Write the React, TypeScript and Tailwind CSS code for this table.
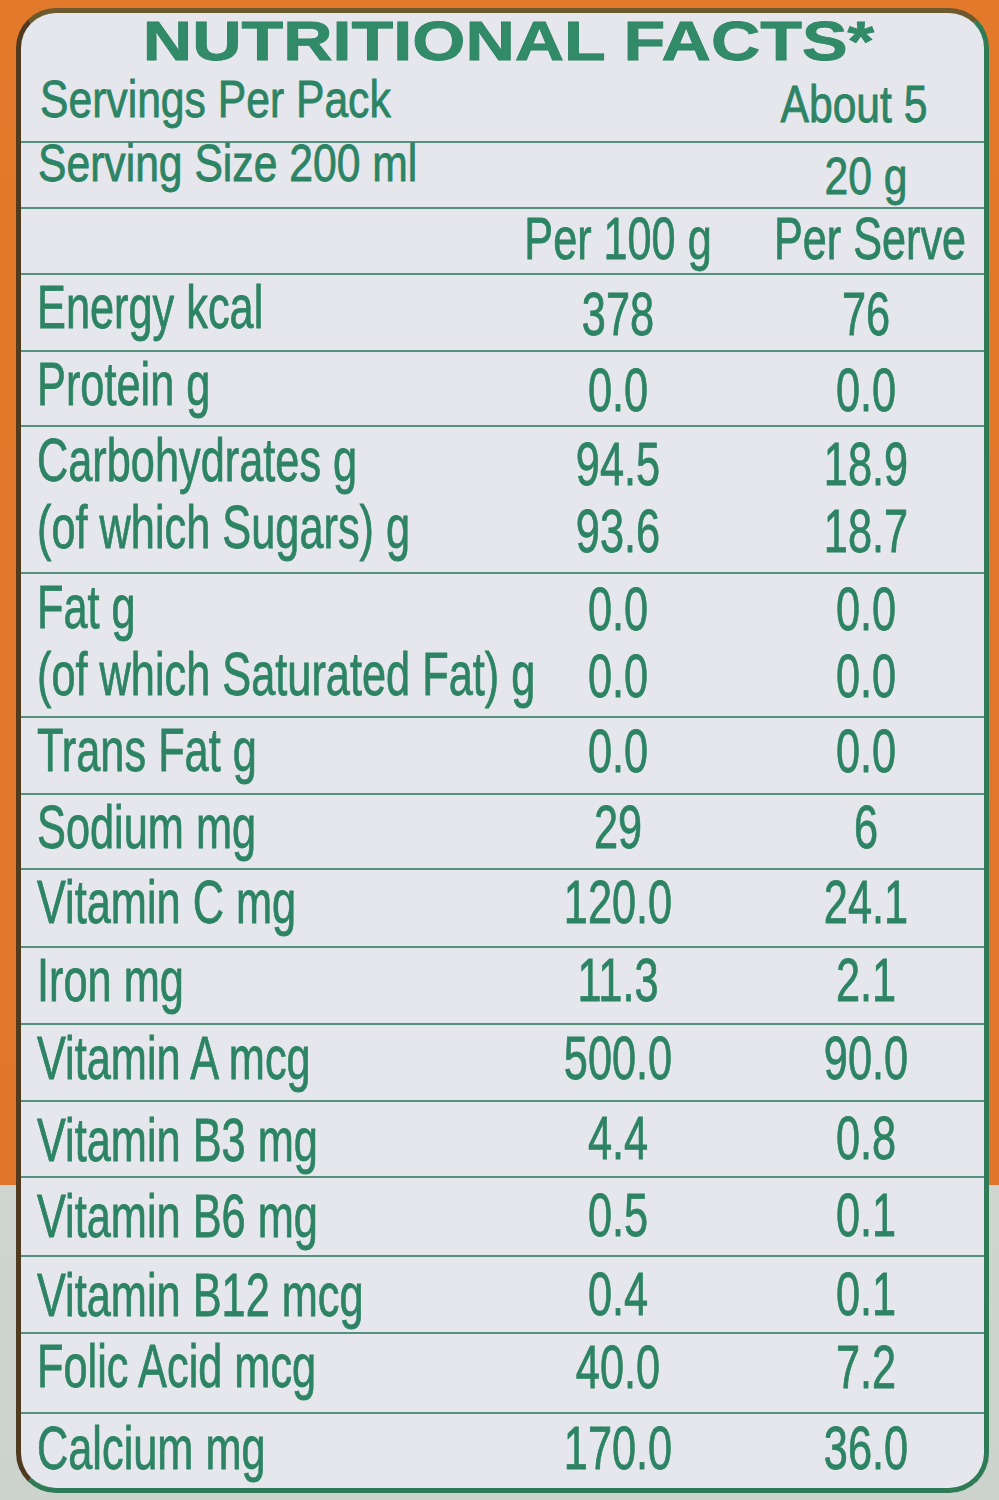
type Row = {
  label: string[];
  a: string[];
  b: string[];
  h: string;
  lead: string;
  pt: string;
  nudge: string;
};

const rows: Row[] = [
  { label: ['Energy kcal'], a: ['378'], b: ['76'], h: 'h-[77px]', lead: 'leading-[61px]', pt: 'pt-[2px]', nudge: 'pt-[9px]' },
  { label: ['Protein g'], a: ['0.0'], b: ['0.0'], h: 'h-[75px]', lead: 'leading-[61px]', pt: 'pt-[2px]', nudge: 'pt-[8px]' },
  {
    label: ['Carbohydrates g', '(of which Sugars) g'],
    a: ['94.5', '93.6'],
    b: ['18.9', '18.7'],
    h: 'h-[147px]',
    lead: 'leading-[67px]',
    pt: 'pt-0',
    nudge: 'pt-[4px]',
  },
  {
    label: ['Fat g', '(of which Saturated Fat) g'],
    a: ['0.0', '0.0'],
    b: ['0.0', '0.0'],
    h: 'h-[144px]',
    lead: 'leading-[67px]',
    pt: 'pt-0',
    nudge: 'pt-[2px]',
  },
  { label: ['Trans Fat g'], a: ['0.0'], b: ['0.0'], h: 'h-[77px]', lead: 'leading-[61px]', pt: 'pt-[2px]', nudge: 'pt-[3px]' },
  { label: ['Sodium mg'], a: ['29'], b: ['6'], h: 'h-[75px]', lead: 'leading-[61px]', pt: 'pt-[2px]', nudge: 'pt-[2px]' },
  { label: ['Vitamin C mg'], a: ['120.0'], b: ['24.1'], h: 'h-[78px]', lead: 'leading-[61px]', pt: 'pt-[2px]', nudge: 'pt-[2px]' },
  { label: ['Iron mg'], a: ['11.3'], b: ['2.1'], h: 'h-[77px]', lead: 'leading-[61px]', pt: 'pt-[2px]', nudge: 'pt-[2px]' },
  { label: ['Vitamin A mcg'], a: ['500.0'], b: ['90.0'], h: 'h-[77px]', lead: 'leading-[61px]', pt: 'pt-[3px]', nudge: 'pt-[3px]' },
  { label: ['Vitamin B3 mg'], a: ['4.4'], b: ['0.8'], h: 'h-[76px]', lead: 'leading-[61px]', pt: 'pt-[8px]', nudge: 'pt-[6px]' },
  { label: ['Vitamin B6 mg'], a: ['0.5'], b: ['0.1'], h: 'h-[79px]', lead: 'leading-[61px]', pt: 'pt-[8px]', nudge: 'pt-[7px]' },
  { label: ['Vitamin B12 mcg'], a: ['0.4'], b: ['0.1'], h: 'h-[77px]', lead: 'leading-[61px]', pt: 'pt-[8px]', nudge: 'pt-[7px]' },
  { label: ['Folic Acid mcg'], a: ['40.0'], b: ['7.2'], h: 'h-[80px]', lead: 'leading-[61px]', pt: 'pt-[2px]', nudge: 'pt-[3px]' },
  { label: ['Calcium mg'], a: ['170.0'], b: ['36.0'], h: 'h-[76px]', lead: 'leading-[61px]', pt: 'pt-[4px]', nudge: 'pt-[4px]' },
];

function NutrientRow({ row }: { row: Row }) {
  return (
    <div className={`grid grid-cols-[minmax(0,1fr)_260px_236px] border-t-2 border-[#55907c] text-[61px] ${row.h} ${row.lead}`}>
      <div className={`pl-[16px] ${row.pt}`}>
        {row.label.map(l => (
          <div key={l} className="origin-left scale-x-[0.71] whitespace-nowrap">{l}</div>
        ))}
      </div>
      <div className={row.nudge}>
        {row.a.map((v, i) => (
          <div key={i} className="flex justify-center scale-x-[0.71] whitespace-nowrap">{v}</div>
        ))}
      </div>
      <div className={row.nudge}>
        {row.b.map((v, i) => (
          <div key={i} className="flex justify-center scale-x-[0.71] whitespace-nowrap">{v}</div>
        ))}
      </div>
    </div>
  );
}

export default function App() {
  return (
    <div className="w-[999px] h-[1500px] overflow-hidden bg-[linear-gradient(180deg,#e2792b_0%,#e0762a_79%,#cfd6d0_79%,#cbd3cc_100%)] pt-[8px] pl-[16px] pr-[10px] pb-[7px] font-['Liberation_Sans',Arial,sans-serif] text-[#2d8464] [-webkit-text-stroke:0.8px_#2d8464]">
      <div className="h-full rounded-[40px] border-[5px] border-t-[#6c5a2e] border-l-[#4f3a20] border-r-[#2e7b56] border-b-[#2e7b56] bg-[#e6e7ec] overflow-hidden">
        {/* title + servings per pack */}
        <div className="h-[128px]">
          <div className="pt-[2px] pl-[12px] text-center text-[56px] leading-[52px] font-bold text-[#318b69]">
            <div className="flex justify-center scale-x-[1.22] whitespace-nowrap">NUTRITIONAL FACTS*</div>
          </div>
          <div className="mt-[6px] grid grid-cols-[minmax(0,1fr)_260px_236px] text-[52px] leading-[52px]">
            <div className="pl-[19px]">
              <div className="origin-left scale-x-[0.82] whitespace-nowrap">Servings Per Pack</div>
            </div>
            <div />
            <div className="pt-[5px] pr-[24px]">
              <div className="flex justify-center scale-x-[0.82] whitespace-nowrap">About 5</div>
            </div>
          </div>
        </div>

        <div className="grid h-[66px] grid-cols-[minmax(0,1fr)_260px_236px] border-t-2 border-[#55907c] text-[52px] leading-[40px]">
          <div className="pl-[17px]">
            <div className="origin-left scale-x-[0.82] whitespace-nowrap">Serving Size 200 ml</div>
          </div>
          <div />
          <div className="pt-[13px]">
            <div className="flex justify-center scale-x-[0.82] whitespace-nowrap">20 g</div>
          </div>
        </div>

        <div className="grid h-[66px] grid-cols-[minmax(0,1fr)_260px_236px] border-t-2 border-[#55907c] pt-[3px] text-[60px] leading-[54px]">
          <div />
          <div>
            <div className="flex justify-center scale-x-[0.72] whitespace-nowrap">Per 100 g</div>
          </div>
          <div className="pl-[8px]">
            <div className="flex justify-center scale-x-[0.72] whitespace-nowrap">Per Serve</div>
          </div>
        </div>

        {rows.map(r => (
          <NutrientRow key={r.label[0]} row={r} />
        ))}
      </div>
    </div>
  );
}
